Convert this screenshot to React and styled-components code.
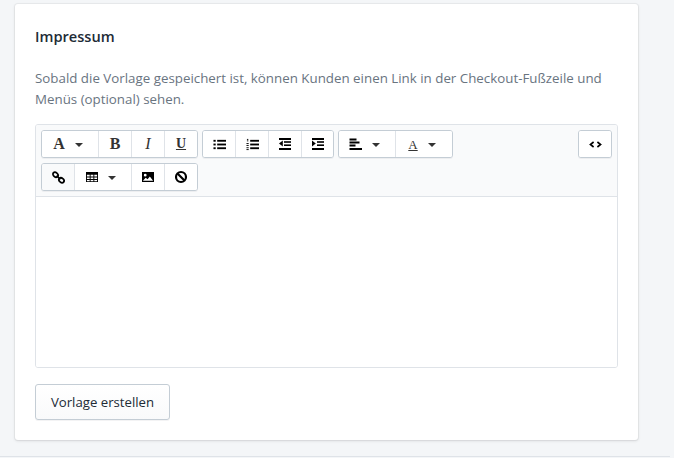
import React from "react";
import styled, { createGlobalStyle } from "styled-components";

const Global = createGlobalStyle`
  html, body { margin: 0; padding: 0; background: #f4f6f8; }
  body { font-family: "Open Sans", "Noto Sans", sans-serif; width: 674px; height: 458px; overflow: hidden; }
`;
const Page = styled.div`
  width: 674px; height: 458px; box-sizing: border-box; padding: 4px 0 0 15px;
  display: flex; flex-direction: column;
`;
const Card = styled.section`
  box-sizing: border-box; width: 623px; height: 436px; background: #fff; border-radius: 3px;
  padding: 20px; flex: none;
  box-shadow: 0 0 0 1px rgba(63,63,68,.05), 0 1px 3px 0 rgba(63,63,68,.15);
`;
const Title = styled.h2`
  margin: 0; font-size: 14.6px; line-height: 24px; font-weight: 600; color: #212b36;
`;
const Help = styled.p`
  margin: 20px 0 0; font-size: 13.33px; line-height: 21px; color: #69747f; height: 42px;
`;
const Editor = styled.div`
  box-sizing: border-box; margin-top: 14px; width: 583px; height: 244px; border: 1px solid #dfe3e8; border-radius: 3px;
  display: flex; flex-direction: column; overflow: hidden;
`;
const Toolbar = styled.div`
  box-sizing: border-box; height: 72px; flex: none; background: #f9fafb; border-bottom: 1px solid #dfe3e8;
  padding: 5px 5px 0 5px; display: flex; flex-direction: column; gap: 5px;
`;
const Row = styled.div`
  display: flex; gap: 4px; height: 28px;
`;
const Group = styled.div`
  display: flex; height: 28px; box-sizing: border-box; border: 1px solid #c4cdd5; border-radius: 3px;
  background: #fff; box-shadow: 0 1px 0 rgba(22,29,37,.05); overflow: hidden;
`;
const Tool = styled.button`
  box-sizing: border-box; width: ${p => p.$w}px; height: 26px; margin: 0; border: 0;
  padding: 0 ${p => p.$pr || 0}px 0 0;
  border-left: ${p => p.$first ? "0" : "1px solid #dfe3e8"};
  background: ${p => p.$active ? "#f9fafb" : "#fff"}; color: #212b36;
  display: flex; align-items: center; justify-content: center; gap: 10px;
`;
const Spacer = styled.div`flex: 1;`;
const Glyph = styled.span`
  font-family: "Liberation Serif", serif; font-size: ${p => p.$size || 16}px; line-height: 1; color: #333;
  font-weight: ${p => p.$weight || 700}; font-style: ${p => p.$italic ? "italic" : "normal"};
  text-decoration: ${p => p.$underline ? "underline" : "none"};
`;
const Caret = styled.i`
  width: 0; height: 0; border-left: 4.2px solid transparent; border-right: 4.2px solid transparent;
  border-top: 4.4px solid #333; display: block; margin-top: 1px;
`;
const Content = styled.div`flex: 1; background: #fff;`;
const Action = styled.button`
  display: block; box-sizing: border-box; margin-top: 16px; width: 135px; height: 36px; padding: 0;
  border: 1px solid #c4cdd5; border-radius: 3px; font: 400 13.2px "Open Sans", sans-serif; color: #212b36;
  background: linear-gradient(180deg, #fff, #f9fafb); box-shadow: 0 1px 0 rgba(22,29,37,.05);
`;
const FooterLine = styled.div`
  margin-top: 16px; height: 1px; width: 670px; margin-left: -15px; background: #dfe3e8; flex: none;
`;
const Icon = ({ children, w = 14, h = 14, vb = "0 0 14 14" }) => (
  <svg width={w} height={h} viewBox={vb} fill="#000" aria-hidden="true">{children}</svg>
);
const Lines = ({ items }) => items.map(([x, y, w, h = 2], i) => <rect key={i} x={x} y={y} width={w} height={h} />);

export default function App() {
  return (
    <Page>
      <Global />
      <Card>
        <Title>Impressum</Title>
        <Help>Sobald die Vorlage gespeichert ist, können Kunden einen Link in der Checkout-Fußzeile und Menüs (optional) sehen.</Help>
        <Editor>
          <Toolbar>
            <Row>
              <Group>
                <Tool $first $w={56} $pr={4}><Glyph>A</Glyph><Caret /></Tool>
                <Tool $w={33}><Glyph>B</Glyph></Tool>
                <Tool $w={33}><Glyph $italic $weight={400}>I</Glyph></Tool>
                <Tool $w={33}><Glyph $underline $size={14}>U</Glyph></Tool>
              </Group>
              <Group>
                <Tool $first $w={32}><Icon w={13} h={13} vb="0 0 14 14"><Lines items={[[0.5, 2, 2.4, 2], [0.5, 6, 2.4, 2], [0.5, 10, 2.4, 2]]} /><Lines items={[[4.5, 2, 9.5], [4.5, 6, 9.5], [4.5, 10, 9.5]]} /></Icon></Tool>
                <Tool $w={33}><Icon w={13} h={13} vb="0 0 14 14"><Lines items={[[1, 1, 1.5, 1], [1, 2.6, 1.5, 1], [0.5, 5.5, 2.4, 1], [0.5, 7.5, 2.4, 1], [0.5, 10, 2.4, 1], [0.5, 12, 2.4, 1]]} /><Lines items={[[4.5, 2, 9.5], [4.5, 6, 9.5], [4.5, 10, 9.5]]} /></Icon></Tool>
                <Tool $w={33}><Icon><Lines items={[[1, 1, 12], [6, 4.2, 7, 1.6], [6, 7.4, 7, 1.6], [1, 11, 12]]} /><path d="M4.8 3.6v5.8L1 6.5z" /></Icon></Tool>
                <Tool $w={32}><Icon><Lines items={[[1, 1, 12], [6, 4.2, 7, 1.6], [6, 7.4, 7, 1.6], [1, 11, 12]]} /><path d="M1 3.6v5.8l3.8-2.9z" /></Icon></Tool>
              </Group>
              <Group>
                <Tool $first $w={56} $pr={5}><Icon w={13} h={13} vb="0 0 13 13"><Lines items={[[0.5, 0.5, 7], [0.5, 3.5, 10], [0.5, 6.5, 6], [0.5, 10, 12.5]]} /></Icon><Caret /></Tool>
                <Tool $w={57} $pr={4}><Glyph $weight={400} $size={13} $underline>A</Glyph><Caret /></Tool>
              </Group>
              <Spacer />
              <Group>
                <Tool $first $w={32}><Icon w={13} h={7} vb="0 0 13 7"><path d="M4.6 1 1.4 3.5l3.2 2.5" fill="none" stroke="#000" strokeWidth="1.6" /><path d="M8.4 1l3.2 2.5L8.4 6" fill="none" stroke="#000" strokeWidth="1.6" /></Icon></Tool>
              </Group>
            </Row>
            <Row>
              <Group>
                <Tool $first $active $w={32}><Icon w={13} h={13}><path d="M5 5 9 9" stroke="#000" strokeWidth="1.8" /><ellipse cx="3.8" cy="4" rx="3" ry="2.3" transform="rotate(40 3.8 4)" fill="none" stroke="#000" strokeWidth="1.9" /><ellipse cx="10.2" cy="10" rx="3" ry="2.3" transform="rotate(40 10.2 10)" fill="none" stroke="#000" strokeWidth="1.9" /></Icon></Tool>
                <Tool $w={57} $pr={5}><Icon w={12} h={12} vb="0 0 13 13"><path fillRule="evenodd" d="M0 1h13v11H0zM1 4v2h3V4zm4 0v2h3V4zm4 0v2h3V4zM1 7v1.8h3V7zm4 0v1.8h3V7zm4 0v1.8h3V7zM1 9.8V11h3V9.8zm4 0V11h3V9.8zm4 0V11h3V9.8z" /></Icon><Caret /></Tool>
                <Tool $w={33}><Icon w={12} h={12} vb="0 0 13 13"><path fillRule="evenodd" d="M0 1h13v11H0zm1 9.5h11L8.5 6 6 9 4 7.2zM3.5 3A1.5 1.5 0 1 0 3.5 6 1.5 1.5 0 0 0 3.5 3z" /></Icon></Tool>
                <Tool $w={33}><Icon><circle cx="7" cy="7" r="5" fill="none" stroke="#000" strokeWidth="2.2" /><path d="M3.5 3.5 10.5 10.5" stroke="#000" strokeWidth="2.2" /></Icon></Tool>
              </Group>
            </Row>
          </Toolbar>
          <Content />
        </Editor>
        <Action>Vorlage erstellen</Action>
      </Card>
      <FooterLine />
    </Page>
  );
}
